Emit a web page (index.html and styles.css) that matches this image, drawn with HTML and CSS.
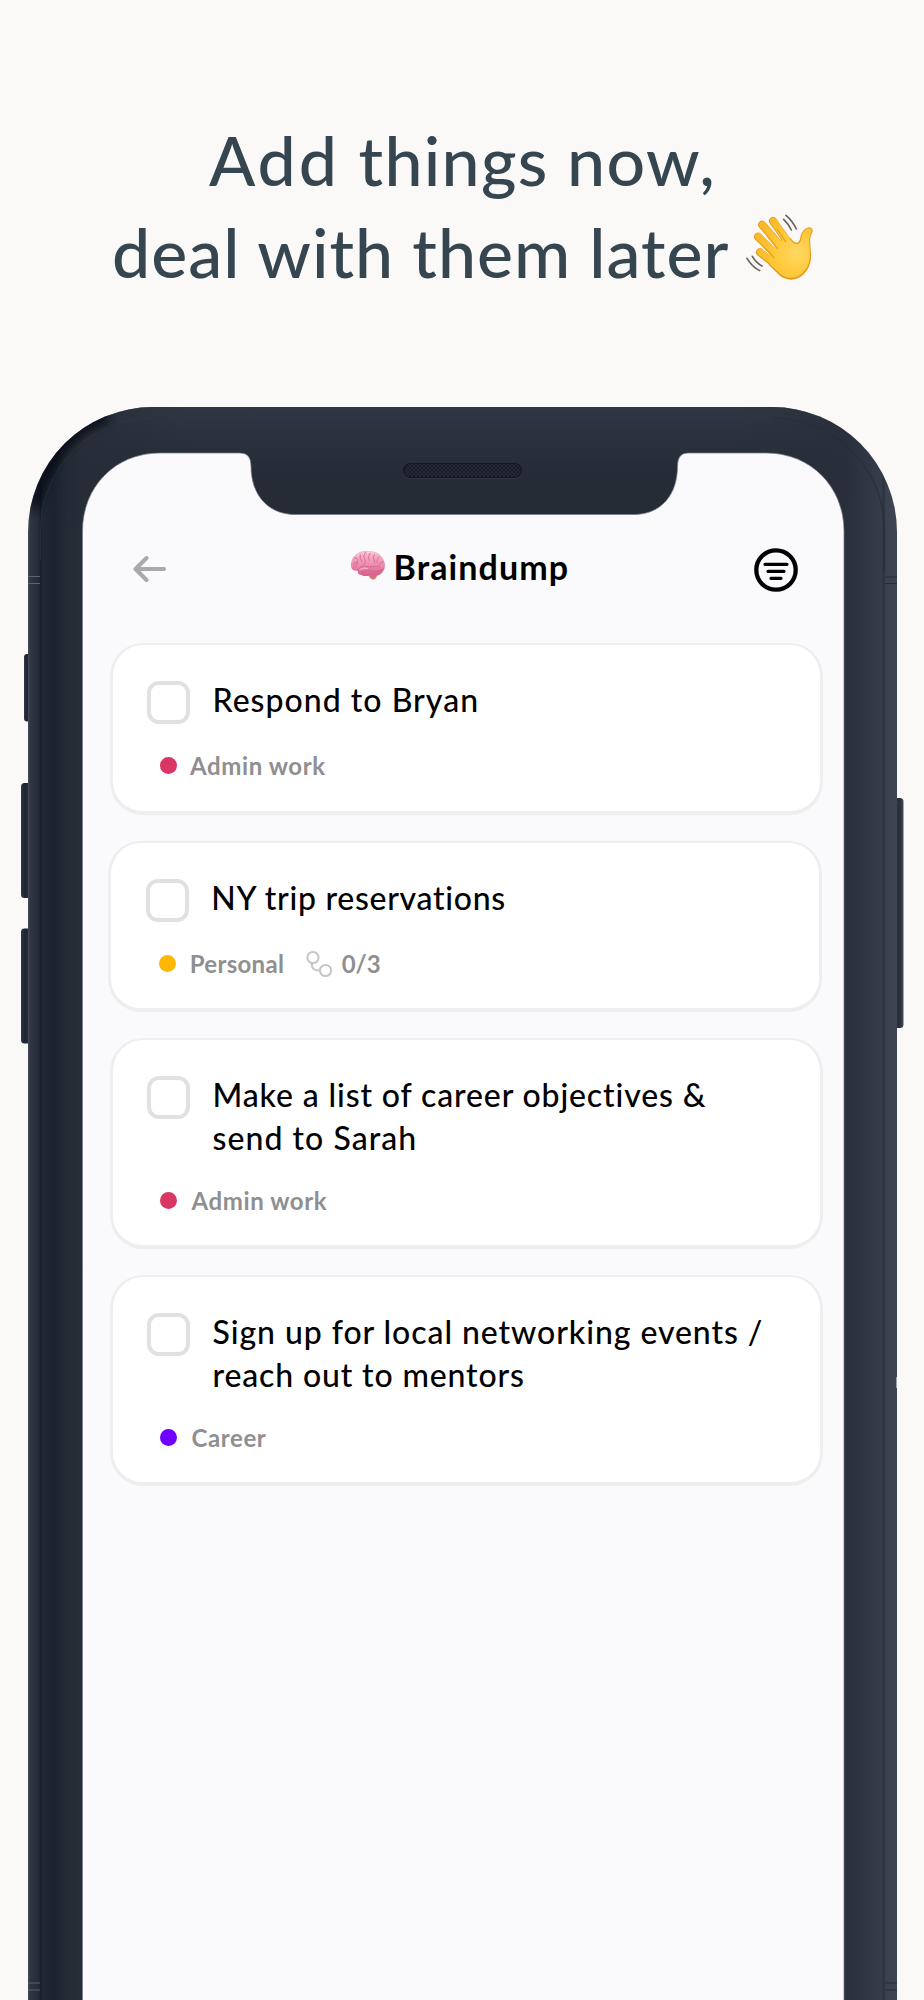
FILE: index.html
```html
<!DOCTYPE html>
<html lang="en">
<head>
<meta charset="utf-8">
<title>Braindump</title>
<link rel="stylesheet" href="styles.css">
</head>
<body>
<main class="page">
  <h1 class="headline">
    <span class="headline-row"><span class="h-one"><span class="h-add">Add</span> things now,</span></span>
    <span class="headline-row"><span class="h-two">deal with them later</span>
      <svg class="wave" viewBox="735 310 210 205" aria-label="waving hand">
        <defs>
          <radialGradient id="skin" gradientUnits="userSpaceOnUse" cx="890" cy="430" r="125">
            <stop offset="0" stop-color="#ffd863"/><stop offset=".5" stop-color="#fec93c"/><stop offset="1" stop-color="#f9b928"/>
          </radialGradient>
        </defs>
        <g id="hand">
          <g fill="none" stroke="#e39a17" stroke-linecap="round">
            <path stroke-width="24" d="M819 334L868 404M786 345L846 414M774 381L833 440M780 428L828 466"/>
          </g>
          <path fill="#e39a17" d="M828 400L850 385L872 385C882 402 896 404 900 388C904 368 912 355 927 353C937 353 940 361 937 368C929 382 930 396 932 417C937 455 928 476 911 494C891 514 861 516 838 497L806 465Z"/>
          <g fill="none" stroke="url(#skin)" stroke-linecap="round">
            <path stroke-width="20" d="M820 334L869 404M787 345L847 414M775 380L834 439M781 427L829 463"/>
          </g>
          <path fill="url(#skin)" d="M828 403L850 388L870 388C882 408 898 408 903 390C906 370 914 358 926 356C934 356 937 361 934 367C926 382 927 397 929 417C933 453 925 473 908 490C890 508 862 510 841 493L808 462Z"/>
          <path fill="none" stroke="#e8a51f" stroke-width="4" stroke-linecap="round" d="M832 359L857 396M802 380L832 416M795 415L822 444"/>
        </g>
        <path fill="none" stroke="#66635f" stroke-width="5" stroke-linecap="round" d="M858 317Q878 334 889 358M851 329Q866 343 874 361M741 446Q756 471 779 483M757 440Q768 459 786 469"/>
      </svg>
    </span>
  </h1>

  <section class="phone">
    <svg class="frame" viewBox="20 400 884 1600" aria-hidden="true">
      <defs>
        <linearGradient id="body" gradientUnits="userSpaceOnUse" x1="28" y1="0" x2="897" y2="0">
          <stop offset="0" stop-color="#454958"/><stop offset=".003" stop-color="#303542"/>
          <stop offset=".0125" stop-color="#252b38"/><stop offset=".014" stop-color="#181f2b"/>
          <stop offset=".017" stop-color="#212835"/><stop offset=".03" stop-color="#1b232e"/>
          <stop offset=".044" stop-color="#232b35"/><stop offset=".064" stop-color="#272e38"/>
          <stop offset=".94" stop-color="#29303b"/><stop offset=".982" stop-color="#353c4a"/>
          <stop offset=".985" stop-color="#2b313e"/><stop offset=".987" stop-color="#3a414e"/><stop offset="1" stop-color="#3f4653"/>
        </linearGradient>
        <linearGradient id="top" gradientUnits="userSpaceOnUse" x1="0" y1="407" x2="0" y2="520">
          <stop offset="0" stop-color="#303744"/><stop offset=".25" stop-color="#2b323e"/><stop offset=".6" stop-color="#252c36"/><stop offset="1" stop-color="#252c36"/>
        </linearGradient>
        <linearGradient id="fade" gradientUnits="userSpaceOnUse" x1="60" y1="0" x2="864" y2="0">
          <stop offset="0" stop-color="#000"/><stop offset=".16" stop-color="#fff"/><stop offset=".84" stop-color="#fff"/><stop offset="1" stop-color="#000"/>
        </linearGradient>
        <linearGradient id="fadeDown" gradientUnits="userSpaceOnUse" x1="0" y1="480" x2="0" y2="527">
          <stop offset="0" stop-color="#000" stop-opacity="0"/><stop offset="1" stop-color="#000"/>
        </linearGradient>
        <linearGradient id="keyLeft" x1="0" x2="1"><stop offset="0" stop-color="#303747"/><stop offset=".35" stop-color="#1d2431"/><stop offset="1" stop-color="#2a303e"/></linearGradient>
        <linearGradient id="keyRight" x1="0" x2="1"><stop offset="0" stop-color="#252b36"/><stop offset=".7" stop-color="#2b323e"/><stop offset="1" stop-color="#465060"/></linearGradient>
        <mask id="topMask"><rect x="20" y="400" width="884" height="130" fill="url(#fade)"/><rect x="20" y="480" width="230" height="50" fill="url(#fadeDown)"/><rect x="678" y="480" width="226" height="50" fill="url(#fadeDown)"/></mask>
        <clipPath id="shell"><path d="M28 2010V532A125 125 0 0 1 153 407H772A125 125 0 0 1 897 532V2010Z"/></clipPath>
        <filter id="soft" x="-30%" y="-30%" width="160%" height="160%"><feGaussianBlur stdDeviation="5"/></filter>
        <pattern id="mesh" width="4" height="4" patternUnits="userSpaceOnUse"><rect width="4" height="4" fill="#151a24"/><path d="M0 0L4 4M4 0L0 4" stroke="#2b313c" stroke-width=".8"/></pattern>
      </defs>
      <rect x="24" y="654" width="7" height="67.500" rx="3" fill="url(#keyLeft)"/>
      <rect x="21" y="783" width="10" height="115" rx="3.500" fill="url(#keyLeft)"/>
      <rect x="21" y="928.500" width="10" height="115" rx="3.500" fill="url(#keyLeft)"/>
      <rect x="894" y="798" width="9.500" height="230" rx="3.500" fill="url(#keyRight)"/>
      <g clip-path="url(#shell)">
        <rect x="28" y="407" width="869" height="1600" fill="url(#body)"/>
        <rect x="28" y="407" width="869" height="120" fill="url(#top)" mask="url(#topMask)"/>
        <path d="M35 505Q41 474 60 450T104 418" fill="none" stroke="#000108" stroke-width="10" stroke-linecap="round" opacity=".8" filter="url(#soft)"/>
        <path d="M40.500 560V530A112 112 0 0 1 152.500 418" fill="none" stroke="#363d4a" stroke-width="1" opacity=".45"/>
        <path d="M772 418A112 112 0 0 1 884.500 530V570" fill="none" stroke="#272d39" stroke-width="1.200" opacity=".8"/>
        <path d="M28 576.500H40M28 583.500H40M28 1983H40M28 1990H40" stroke="#5c6270" stroke-width="1.200"/>
        <path d="M885 577H897M885 583.500H897M885 1983H897M885 1990H897" stroke="#272d38" stroke-width="1.200"/>
        <path d="M896.700 1377V1388" stroke="#b5b7bd" stroke-width="1"/>
      </g>
      <path fill="#fafafc" stroke="#747a85" stroke-width=".7" d="M82.500 2010V531C82.500 488 114 453 160 453H240Q251 453 251 466C251 496 269 514.500 295 514.500H634C660 514.500 677.500 496 677.500 466Q677.500 453 688 453H766C812 453 844 488 844 531V2010Z"/>
      <rect x="402.500" y="463.500" width="120" height="15.500" rx="7.700" fill="#303743"/>
      <rect x="403.500" y="463.500" width="118" height="14" rx="7" fill="url(#mesh)" stroke="#121720" stroke-width="1.200"/>
    </svg>

    <div class="screen">
      <header class="bar">
        <svg class="back" viewBox="0 0 34 28" aria-label="Back"><path d="M31 14H3M13.500 3L2.500 14L13.500 25" fill="none" stroke="#a9a9a9" stroke-width="4" stroke-linecap="round" stroke-linejoin="round"/></svg>
        <div class="bar-title">
          <svg class="brain" viewBox="330 328 108 92" aria-hidden="true">
            <defs><linearGradient id="pink" x1="0" y1="0" x2="0" y2="1"><stop offset="0" stop-color="#f7bfd0"/><stop offset=".55" stop-color="#ee8db0"/><stop offset="1" stop-color="#d45d86"/></linearGradient></defs>
            <path fill="#d9737c" d="M384 399Q398 392 411 400Q412 415 399 417Q389 415 384 399Z"/>
            <path fill="url(#pink)" d="M333 375C332 360 340 344 352 339C362 330 378 329 390 332C405 331 421 339 427 352C437 363 437 382 430 391C424 402 409 409 398 403C385 405 371 409 363 402C354 402 352 395 354 390C341 392 333 385 333 375Z"/>
            <g fill="none" stroke="#cf6088" stroke-width="2.200" stroke-linecap="round">
              <path d="M354 390C359 377 370 374 384 378S408 372 420 379M340 371Q343 363 353 365Q350 377 342 380M345 351Q353 350 353 362M361 339Q357 353 366 364M376 335Q367 347 374 357T371 371M390 337Q382 348 387 359M404 339Q396 352 404 365M418 349Q408 354 412 367M430 364Q420 362 418 373M365 396Q377 385 394 391T422 389M405 400Q416 391 430 386"/>
            </g>
            <path d="M350 347Q359 338 370 338M382 335Q397 335 408 341M360 386Q370 380 382 383" fill="none" stroke="#ffdce5" stroke-width="2.500" stroke-linecap="round" opacity=".8"/>
          </svg>
          <span class="bar-name">Braindump</span>
        </div>
        <svg class="filter" viewBox="0 0 44 44" aria-label="Filter"><circle cx="22" cy="22" r="19.700" fill="none" stroke="#000" stroke-width="4.300"/><path d="M11 16.300H33M14 23.300H30M17 30.300H27" stroke="#000" stroke-width="3.200" stroke-linecap="round"/></svg>
      </header>

      <div class="list">
        <article class="card">
          <div class="task"><span class="check"></span><p class="title"><span class="t-respond">Respond to Bryan</span></p></div>
          <div class="meta"><span class="dot red"></span><span class="tag">Admin work</span></div>
        </article>
        <article class="card shifted">
          <div class="task"><span class="check"></span><p class="title"><span class="t-trip">NY trip reservations</span></p></div>
          <div class="meta"><span class="dot amber"></span><span class="tag t-personal">Personal</span>
            <svg class="subtasks" viewBox="0 0 26 28" aria-hidden="true"><g fill="none" stroke="#c6c6c6" stroke-width="2"><circle cx="7" cy="7.500" r="5.600"/><circle cx="19.500" cy="20.500" r="5.600"/><path d="M6 13Q5 21 14 20.500"/></g></svg>
            <span class="count">0/3</span></div>
        </article>
        <article class="card tall">
          <div class="task"><span class="check"></span><p class="title"><span class="t-make">Make a list of career objectives &amp;</span><br><span class="t-send">send to Sarah</span></p></div>
          <div class="meta wide"><span class="dot red"></span><span class="tag">Admin work</span></div>
        </article>
        <article class="card tall">
          <div class="task"><span class="check"></span><p class="title"><span class="t-sign">Sign up for local networking events /</span><br><span class="t-reach">reach out to mentors</span></p></div>
          <div class="meta wide"><span class="dot violet"></span><span class="tag t-career">Career</span></div>
        </article>
      </div>
    </div>
  </section>
</main>
</body>
</html>
```
FILE: styles.css
```css
* { box-sizing: border-box; }
body { margin: 0; background: #fbf9f7; font-family: Lato, "Open Sans", sans-serif; }
.page { width: 924px; height: 2000px; overflow: hidden; }

.headline {
  margin: 0; padding-top: 114px; height: 400px;
  font-size: 68px; line-height: 92px; font-weight: 500; color: #364650;
}
.headline-row { display: flex; align-items: flex-start; white-space: nowrap; }
.h-one { margin-left: 209px; letter-spacing: 1.300px; }
.h-add { letter-spacing: 3px; }
.h-two { margin-left: 112px; letter-spacing: 1px; width: 633px; }
.wave { width: 70px; height: 68.300px; margin-top: 7px; flex: none; }

.phone { position: relative; width: 924px; height: 1600px; padding: 53px 80px 0 82px; }
.frame { position: absolute; left: 20px; top: 0; width: 884px; height: 1600px; }
.screen { position: relative; }

.bar { display: flex; align-items: center; height: 72px; margin-top: 81px; padding: 0 46px 0 51px; }
.back { width: 34px; height: 28px; flex: none; margin-top: -2px; }
.bar-title { display: flex; align-items: center; padding-left: 183px; flex: 1; }
.brain { width: 36px; height: 30.700px; flex: none; margin-top: -10px; }
.bar-name { font-size: 34px; line-height: 40px; font-weight: 700; letter-spacing: 1.100px; margin: -7px 0 0 7.500px; color: #000; }
.filter { width: 44px; height: 44px; flex: none; }

.list { display: flex; flex-direction: column; gap: 26px; margin-top: 37px; padding-left: 27.500px; }
.card {
  width: 713.500px; height: 171.500px; border: solid #eeeeef; border-width: 2px 3px 4.500px;
  border-radius: 33px; background: #fff; padding: 34.400px 0 34px 34.500px;
  display: flex; flex-direction: column; justify-content: space-between;
}
.card.tall { height: 211px; }
.card.shifted { margin-left: -1.300px; }
.task { display: flex; align-items: flex-start; }
.check { width: 43px; height: 43px; margin-top: 2px; border: 4px solid #e1e1e1; border-radius: 12px; flex: none; }
.title { margin: 0 0 0 22.500px; font-size: 32px; line-height: 42.400px; font-weight: 500; color: #000; white-space: nowrap; }
.t-respond { letter-spacing: 1.020px; }
.t-trip { letter-spacing: .700px; }
.t-make { letter-spacing: .860px; }
.t-send { letter-spacing: 1.050px; }
.t-sign { letter-spacing: .930px; }
.t-reach { letter-spacing: .850px; }

.meta { display: flex; align-items: center; height: 30px; margin-bottom: -4.500px; padding-left: 13px; font-size: 24px; line-height: 30px; font-weight: 700; letter-spacing: .600px; color: #8f8f91; white-space: nowrap; }
.card:not(.tall) .task { height: 47px; }
.dot { width: 17px; height: 17px; border-radius: 50%; margin-top: -1px; flex: none; }
.tag { margin-left: 13px; }
.wide .tag { margin-left: 14.500px; }
.red { background: #d93664; }
.amber { background: #ffb800; }
.violet { background: #7000ff; }
.meta .t-personal { width: 95px; margin-left: 14px; letter-spacing: .300px; }
.subtasks { width: 26px; height: 28px; margin-left: 21px; flex: none; }
.count { margin-left: 10px; letter-spacing: 0; }
```
